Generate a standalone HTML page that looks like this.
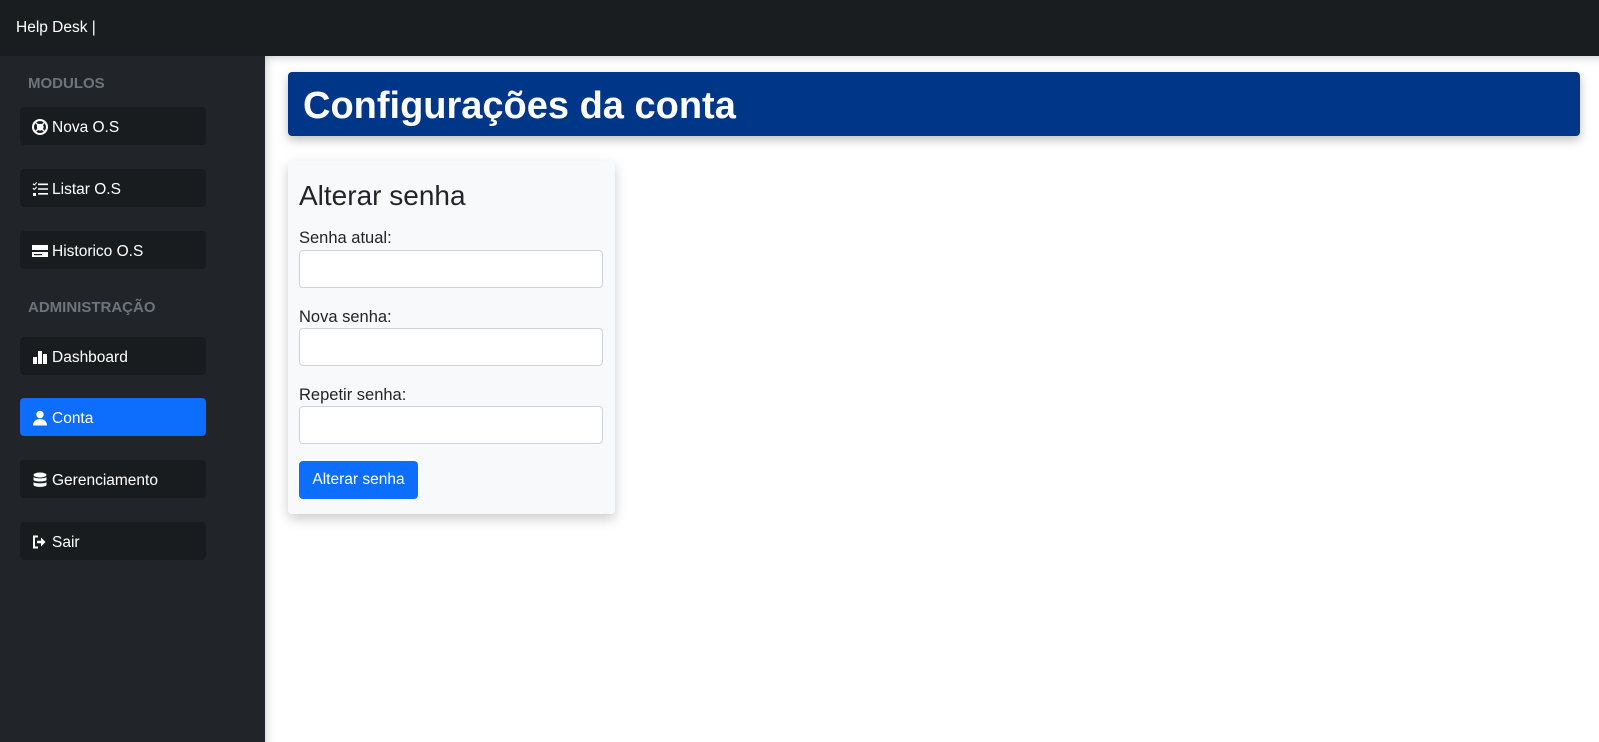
<!DOCTYPE html>
<html><head><meta charset="utf-8"><style>
*{box-sizing:border-box;margin:0;padding:0}
body{width:1599px;height:742px;overflow:hidden;font-family:"Liberation Sans",sans-serif;background:#fff;position:relative}
.nav{position:absolute;left:0;top:0;width:1599px;height:56px;background:#1a1d20;color:#fff;font-size:15.5px;padding:19px 0 0 16px}
.side{position:absolute;left:0;top:56px;width:265px;height:686px;background:#212529}
.sec{position:absolute;left:28px;color:#6c757d;font-size:15px;font-weight:bold}
.item{position:absolute;left:20px;width:186px;height:38px;background:#191c1f;border-radius:4px;color:#fff;font-size:15.5px;display:flex;align-items:center;padding-left:12px;padding-top:4px;gap:4px}
.item.act{background:#0d6efd}
.item svg{width:16px;height:16px;fill:#fff;margin-top:-3px}
.main{position:absolute;left:265px;top:56px;width:1334px;height:686px;box-shadow:inset 6px 6px 10px -6px rgba(0,0,0,.25)}
.hdr{position:absolute;left:288px;top:72px;width:1292px;height:64px;background:#003687;border-radius:4px;color:#fff;font-size:38px;font-weight:bold;padding:13px 0 0 15px;box-shadow:0 4px 10px rgba(0,0,0,.25)}
.card{position:absolute;left:288px;top:161px;width:327px;height:353px;background:#f8f9fa;border-radius:4px;box-shadow:0 5px 12px rgba(0,0,0,.2)}
.card h2{position:absolute;left:11px;top:19px;font-size:28px;font-weight:normal;color:#212529}
.lbl{position:absolute;left:11px;font-size:16.5px;color:#212529}
.inp{position:absolute;left:11px;width:304px;height:38px;background:#fff;border:1px solid #ced4da;border-radius:4px}
.btn{position:absolute;left:11px;top:300px;width:119px;height:38px;background:#0d6efd;border-radius:4px;color:#fff;font-size:15.5px;text-align:center;line-height:38px}
</style></head><body>
<div class="nav">Help Desk |</div>
<div class="side">
<div class="sec" style="top:19px">MODULOS</div>
<div class="item" style="top:51px"><svg viewBox="0 0 16 16"><path d="M8 0a8 8 0 100 16A8 8 0 008 0zm0 2a6 6 0 013.7 1.3L9.9 5.1A3 3 0 008 5a3 3 0 00-1.9.1L4.3 3.3A6 6 0 018 2zM2 8a6 6 0 011.3-3.7l1.8 1.8A3 3 0 005 8c0 .7.1 1.3.1 1.9l-1.8 1.8A6 6 0 012 8zm6 6a6 6 0 01-3.7-1.3l1.8-1.8a3 3 0 003.8 0l1.8 1.8A6 6 0 018 14zm4.7-2.3l-1.8-1.8a3 3 0 000-3.8l1.8-1.8a6 6 0 010 7.4z"/></svg>Nova O.S</div>
<div class="item" style="top:113px"><svg viewBox="0 0 16 16"><path d="M6 2.5h10v1.6H6zM6 7.2h10v1.6H6zM6 12h10v1.6H6zM.5 3.2l1-1 1 1L4.3 1l.8.8L2.5 4.6zM.5 7.7l1-1 1 1L4.3 5.5l.8.8L2.5 9.1zM1 12h3v3H1z"/></svg>Listar O.S</div>
<div class="item" style="top:175px"><svg viewBox="0 0 16 16"><path d="M0 2h16v5H0zM0 9h16v5H0z"/><path d="M2 11h8v1.2H2z" fill="#191c1f"/></svg>Historico O.S</div>
<div class="sec" style="top:243px">ADMINISTRAÇÃO</div>
<div class="item" style="top:281px"><svg viewBox="0 0 16 16"><path d="M1 8h4v7H1zM6 2h4v13H6zM11 5h4v10h-4z"/></svg>Dashboard</div>
<div class="item act" style="top:342px"><svg viewBox="0 0 16 16"><circle cx="8" cy="4.5" r="3.7"/><path d="M1 15.5c0-4 3-6.5 7-6.5s7 2.5 7 6.5z"/></svg>Conta</div>
<div class="item" style="top:404px"><svg viewBox="0 0 16 16"><ellipse cx="8" cy="3" rx="6.5" ry="2.5"/><path d="M1.5 5c1 1.8 12 1.8 13 0v3c-1 2-12 2-13 0zM1.5 10c1 1.8 12 1.8 13 0v3c-1 2.5-12 2.5-13 0z"/></svg>Gerenciamento</div>
<div class="item" style="top:466px"><svg viewBox="0 0 16 16"><path d="M1 1.5h5v2H3v9h3v2H1zM9 3.5l4.5 4.5L9 12.5V9.2H5V6.8h4z"/></svg>Sair</div>
</div>
<div class="main"></div>
<div class="hdr">Configurações da conta</div>
<div class="card">
<h2>Alterar senha</h2>
<div class="lbl" style="top:68px">Senha atual:</div>
<div class="inp" style="top:89px"></div>
<div class="lbl" style="top:147px">Nova senha:</div>
<div class="inp" style="top:167px"></div>
<div class="lbl" style="top:225px">Repetir senha:</div>
<div class="inp" style="top:245px"></div>
<div class="btn">Alterar senha</div>
</div>
</body></html>
